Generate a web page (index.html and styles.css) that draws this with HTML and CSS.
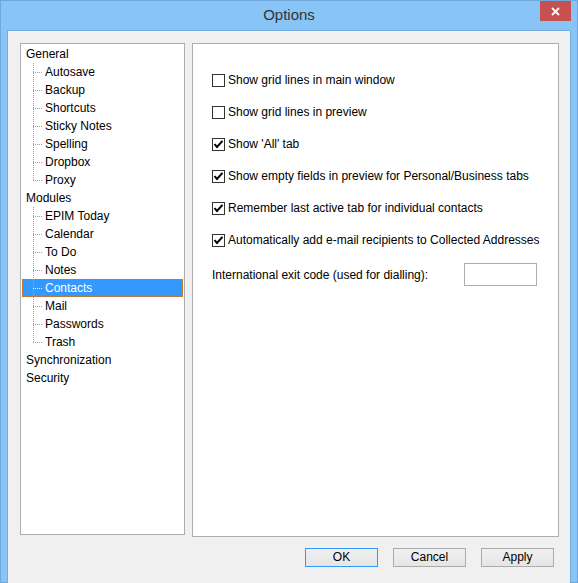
FILE: index.html
```html
<!DOCTYPE html>
<html>
<head>
<meta charset="utf-8">
<title>Options</title>
<link rel="stylesheet" href="styles.css">
</head>
<body>
<div class="window">
  <div class="titlebar">
    <span></span>
    <span class="title">Options</span>
    <span class="close-wrap">
      <span class="close">
        <svg width="9" height="9" viewBox="0 0 9 9"><path d="M1 1 L8 8 M8 1 L1 8" stroke="#fff" stroke-width="1.8" fill="none"/></svg>
      </span>
    </span>
  </div>
  <div class="client">
    <div class="panes">
      <ul class="tree">
        <li class="node">General</li>
        <li class="child">Autosave</li>
        <li class="child">Backup</li>
        <li class="child">Shortcuts</li>
        <li class="child">Sticky Notes</li>
        <li class="child">Spelling</li>
        <li class="child">Dropbox</li>
        <li class="child last">Proxy</li>
        <li class="node">Modules</li>
        <li class="child">EPIM Today</li>
        <li class="child">Calendar</li>
        <li class="child">To Do</li>
        <li class="child">Notes</li>
        <li class="child selected">Contacts</li>
        <li class="child">Mail</li>
        <li class="child">Passwords</li>
        <li class="child last">Trash</li>
        <li class="node">Synchronization</li>
        <li class="node">Security</li>
      </ul>
      <div class="page">
        <label class="check-row">
          <span class="box"></span>
          <span class="label">Show grid lines in main window</span>
        </label>
        <label class="check-row">
          <span class="box"></span>
          <span class="label">Show grid lines in preview</span>
        </label>
        <label class="check-row">
          <span class="box"><svg width="11" height="11" viewBox="0 0 11 11"><path d="M1.5 5.2 L4 8 L9.5 1.8" stroke="#000" stroke-width="2" fill="none"/></svg></span>
          <span class="label">Show 'All' tab</span>
        </label>
        <label class="check-row">
          <span class="box"><svg width="11" height="11" viewBox="0 0 11 11"><path d="M1.5 5.2 L4 8 L9.5 1.8" stroke="#000" stroke-width="2" fill="none"/></svg></span>
          <span class="label">Show empty fields in preview for Personal/Business tabs</span>
        </label>
        <label class="check-row">
          <span class="box"><svg width="11" height="11" viewBox="0 0 11 11"><path d="M1.5 5.2 L4 8 L9.5 1.8" stroke="#000" stroke-width="2" fill="none"/></svg></span>
          <span class="label">Remember last active tab for individual contacts</span>
        </label>
        <label class="check-row">
          <span class="box"><svg width="11" height="11" viewBox="0 0 11 11"><path d="M1.5 5.2 L4 8 L9.5 1.8" stroke="#000" stroke-width="2" fill="none"/></svg></span>
          <span class="label">Automatically add e-mail recipients to Collected Addresses</span>
        </label>
        <div class="field-row">
          <span class="field-label">International exit code (used for dialling):</span>
          <span class="field"></span>
        </div>
      </div>
    </div>
    <div class="buttons">
      <span class="btn default">OK</span>
      <span class="btn">Cancel</span>
      <span class="btn">Apply</span>
    </div>
  </div>
</div>
</body>
</html>
```
FILE: styles.css
```css
html, body {
  margin: 0;
  padding: 0;
  background: #fff;
}

body {
  font-family: "Liberation Sans", Arial, sans-serif;
  font-size: 12px;
  color: #000;
}

.window {
  width: 578px;
  height: 583px;
  box-sizing: border-box;
  border: 1px solid #6fa8dc;
  background: #89c4f7;
  display: flex;
  flex-direction: column;
}

.titlebar {
  flex: none;
  height: 29px;
  display: grid;
  grid-template-columns: 1fr auto 1fr;
  grid-template-rows: 29px;
  align-items: start;
  overflow: hidden;
}

.title {
  font-family: "Liberation Sans", Arial, sans-serif;
  font-size: 15px;
  color: #333;
  line-height: 28px;
}

.close-wrap {
  display: flex;
  justify-content: flex-end;
  padding-right: 6px;
}

.close {
  width: 31px;
  height: 20px;
  background: #c75050;
  display: flex;
  align-items: center;
  justify-content: center;
}

.client {
  flex: none;
  margin: 0 6px 6px 6px;
  border: 1px solid #74acdf;
  background: #f0f0f0;
  height: 544px;
  padding: 12px 16px 8px 12px;
  box-sizing: content-box;
  display: flex;
  flex-direction: column;
}

.panes {
  display: flex;
  align-items: flex-start;
  gap: 7px;
  margin-right: -5px;
}

.tree {
  list-style: none;
  margin: 0;
  padding: 1px;
  width: 165px;
  height: 492px;
  box-sizing: border-box;
  border: 1px solid #abadb3;
  background: #fff;
}

.tree li {
  height: 18px;
  line-height: 18px;
  white-space: nowrap;
}

.node {
  padding-left: 4px;
}

.child {
  padding-left: 23px;
  background:
    repeating-linear-gradient(to right, #a0a0a0 0 1px, transparent 1px 2px) 11px 9px / 10px 1px no-repeat,
    repeating-linear-gradient(to bottom, #a0a0a0 0 1px, transparent 1px 2px) 11px 0 / 1px 100% no-repeat;
}

.child.last {
  background:
    repeating-linear-gradient(to right, #a0a0a0 0 1px, transparent 1px 2px) 11px 9px / 10px 1px no-repeat,
    repeating-linear-gradient(to bottom, #a0a0a0 0 1px, transparent 1px 2px) 11px 0 / 1px 10px no-repeat;
}

.child.selected {
  color: #fff;
  background:
    repeating-linear-gradient(to right, #e8f2ff 0 1px, transparent 1px 2px) 11px 9px / 10px 1px no-repeat,
    repeating-linear-gradient(to bottom, #a0a0a0 0 1px, transparent 1px 2px) 11px 0 / 1px 100% no-repeat,
    #3399ff;
  outline: 1px dotted #b97a3a;
  outline-offset: -1px;
}

.page {
  width: 367px;
  height: 494px;
  box-sizing: border-box;
  border: 1px solid #abadb3;
  background: #fff;
  padding: 30px 0 0 19px;
  display: flex;
  flex-direction: column;
  gap: 19px;
}

.check-row {
  display: flex;
  align-items: center;
  height: 13px;
  white-space: nowrap;
}

.box {
  width: 13px;
  height: 13px;
  box-sizing: border-box;
  border: 1px solid #333;
  background: #fff;
  display: flex;
  align-items: center;
  justify-content: center;
  flex: none;
}

.label {
  margin-left: 3px;
  line-height: 13px;
}

.field-row {
  display: flex;
  align-items: center;
  margin-top: -3px;
}

.field-label {
  width: 252px;
  flex: none;
}

.field {
  width: 73px;
  height: 23px;
  box-sizing: border-box;
  border: 1px solid #abadb3;
  background: #fff;
}

.buttons {
  display: flex;
  justify-content: flex-end;
  gap: 15px;
  margin-top: 11px;
}

.btn {
  width: 73px;
  height: 19px;
  box-sizing: border-box;
  border: 1px solid #acacac;
  background: linear-gradient(#f0f0f0, #e5e5e5);
  display: flex;
  align-items: center;
  justify-content: center;
  line-height: 17px;
}

.btn.default {
  border-color: #3399ff;
}
```
